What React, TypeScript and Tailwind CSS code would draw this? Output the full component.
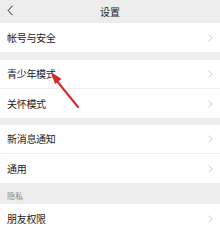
import React from "react";

const font = { fontFamily: '"Noto Sans CJK SC", "Noto Sans", sans-serif' };

function Chevron() {
  return (
    <svg width="5" height="8" viewBox="0 0 5 8" className="mr-[7px]">
      <path d="M0.8 0.6 L4.2 4 L0.8 7.4" fill="none" stroke="#c4c4c4" strokeWidth="0.9" />
    </svg>
  );
}

function Row({ label, h, border }: { label: string; h: string; border?: boolean }) {
  return (
    <div className={`flex items-center justify-between bg-white pl-[7px] ${h} ${border ? "border-b border-[#f0f0f0]" : ""}`}>
      <span className="text-[10px] leading-none text-[#1c1c1c] tracking-[-0.3px]">{label}</span>
      <Chevron />
    </div>
  );
}

export default function App() {
  return (
    <div className="relative w-[220px] h-[229px] overflow-hidden bg-[#ededed]" style={font}>
      <div className="relative flex items-center justify-center h-[23px] bg-[#ededed]">
        <svg width="7" height="11" viewBox="0 0 7 11" className="absolute left-[7px] top-[5px]">
          <path d="M5.5 0.8 L1.2 5.5 L5.5 10.2" fill="none" stroke="#2a2a2a" strokeWidth="1" />
        </svg>
        <span className="text-[10px] leading-none text-[#1c1c1c]">设置</span>
      </div>
      <Row label="帐号与安全" h="h-[29px]" />
      <div className="h-[8px]" />
      <Row label="青少年模式" h="h-[29px]" border />
      <Row label="关怀模式" h="h-[29px]" />
      <div className="h-[7px]" />
      <Row label="新消息通知" h="h-[29px]" border />
      <Row label="通用" h="h-[29px]" />
      <div className="flex items-end h-[21px] pl-[7px] pb-[4px]">
        <span className="text-[8px] leading-none text-[#8a8a8a]">隐私</span>
      </div>
      <Row label="朋友权限" h="h-[29px]" />
      <svg className="absolute left-0 top-0 pointer-events-none" width="220" height="229" viewBox="0 0 220 229">
        <path d="M78 107 L56.5 80.5" stroke="#d8262b" strokeWidth="2" strokeLinecap="round" />
        <path d="M51 72 L61.5 79 L55 84 Z" fill="#d8262b" />
      </svg>
    </div>
  );
}
